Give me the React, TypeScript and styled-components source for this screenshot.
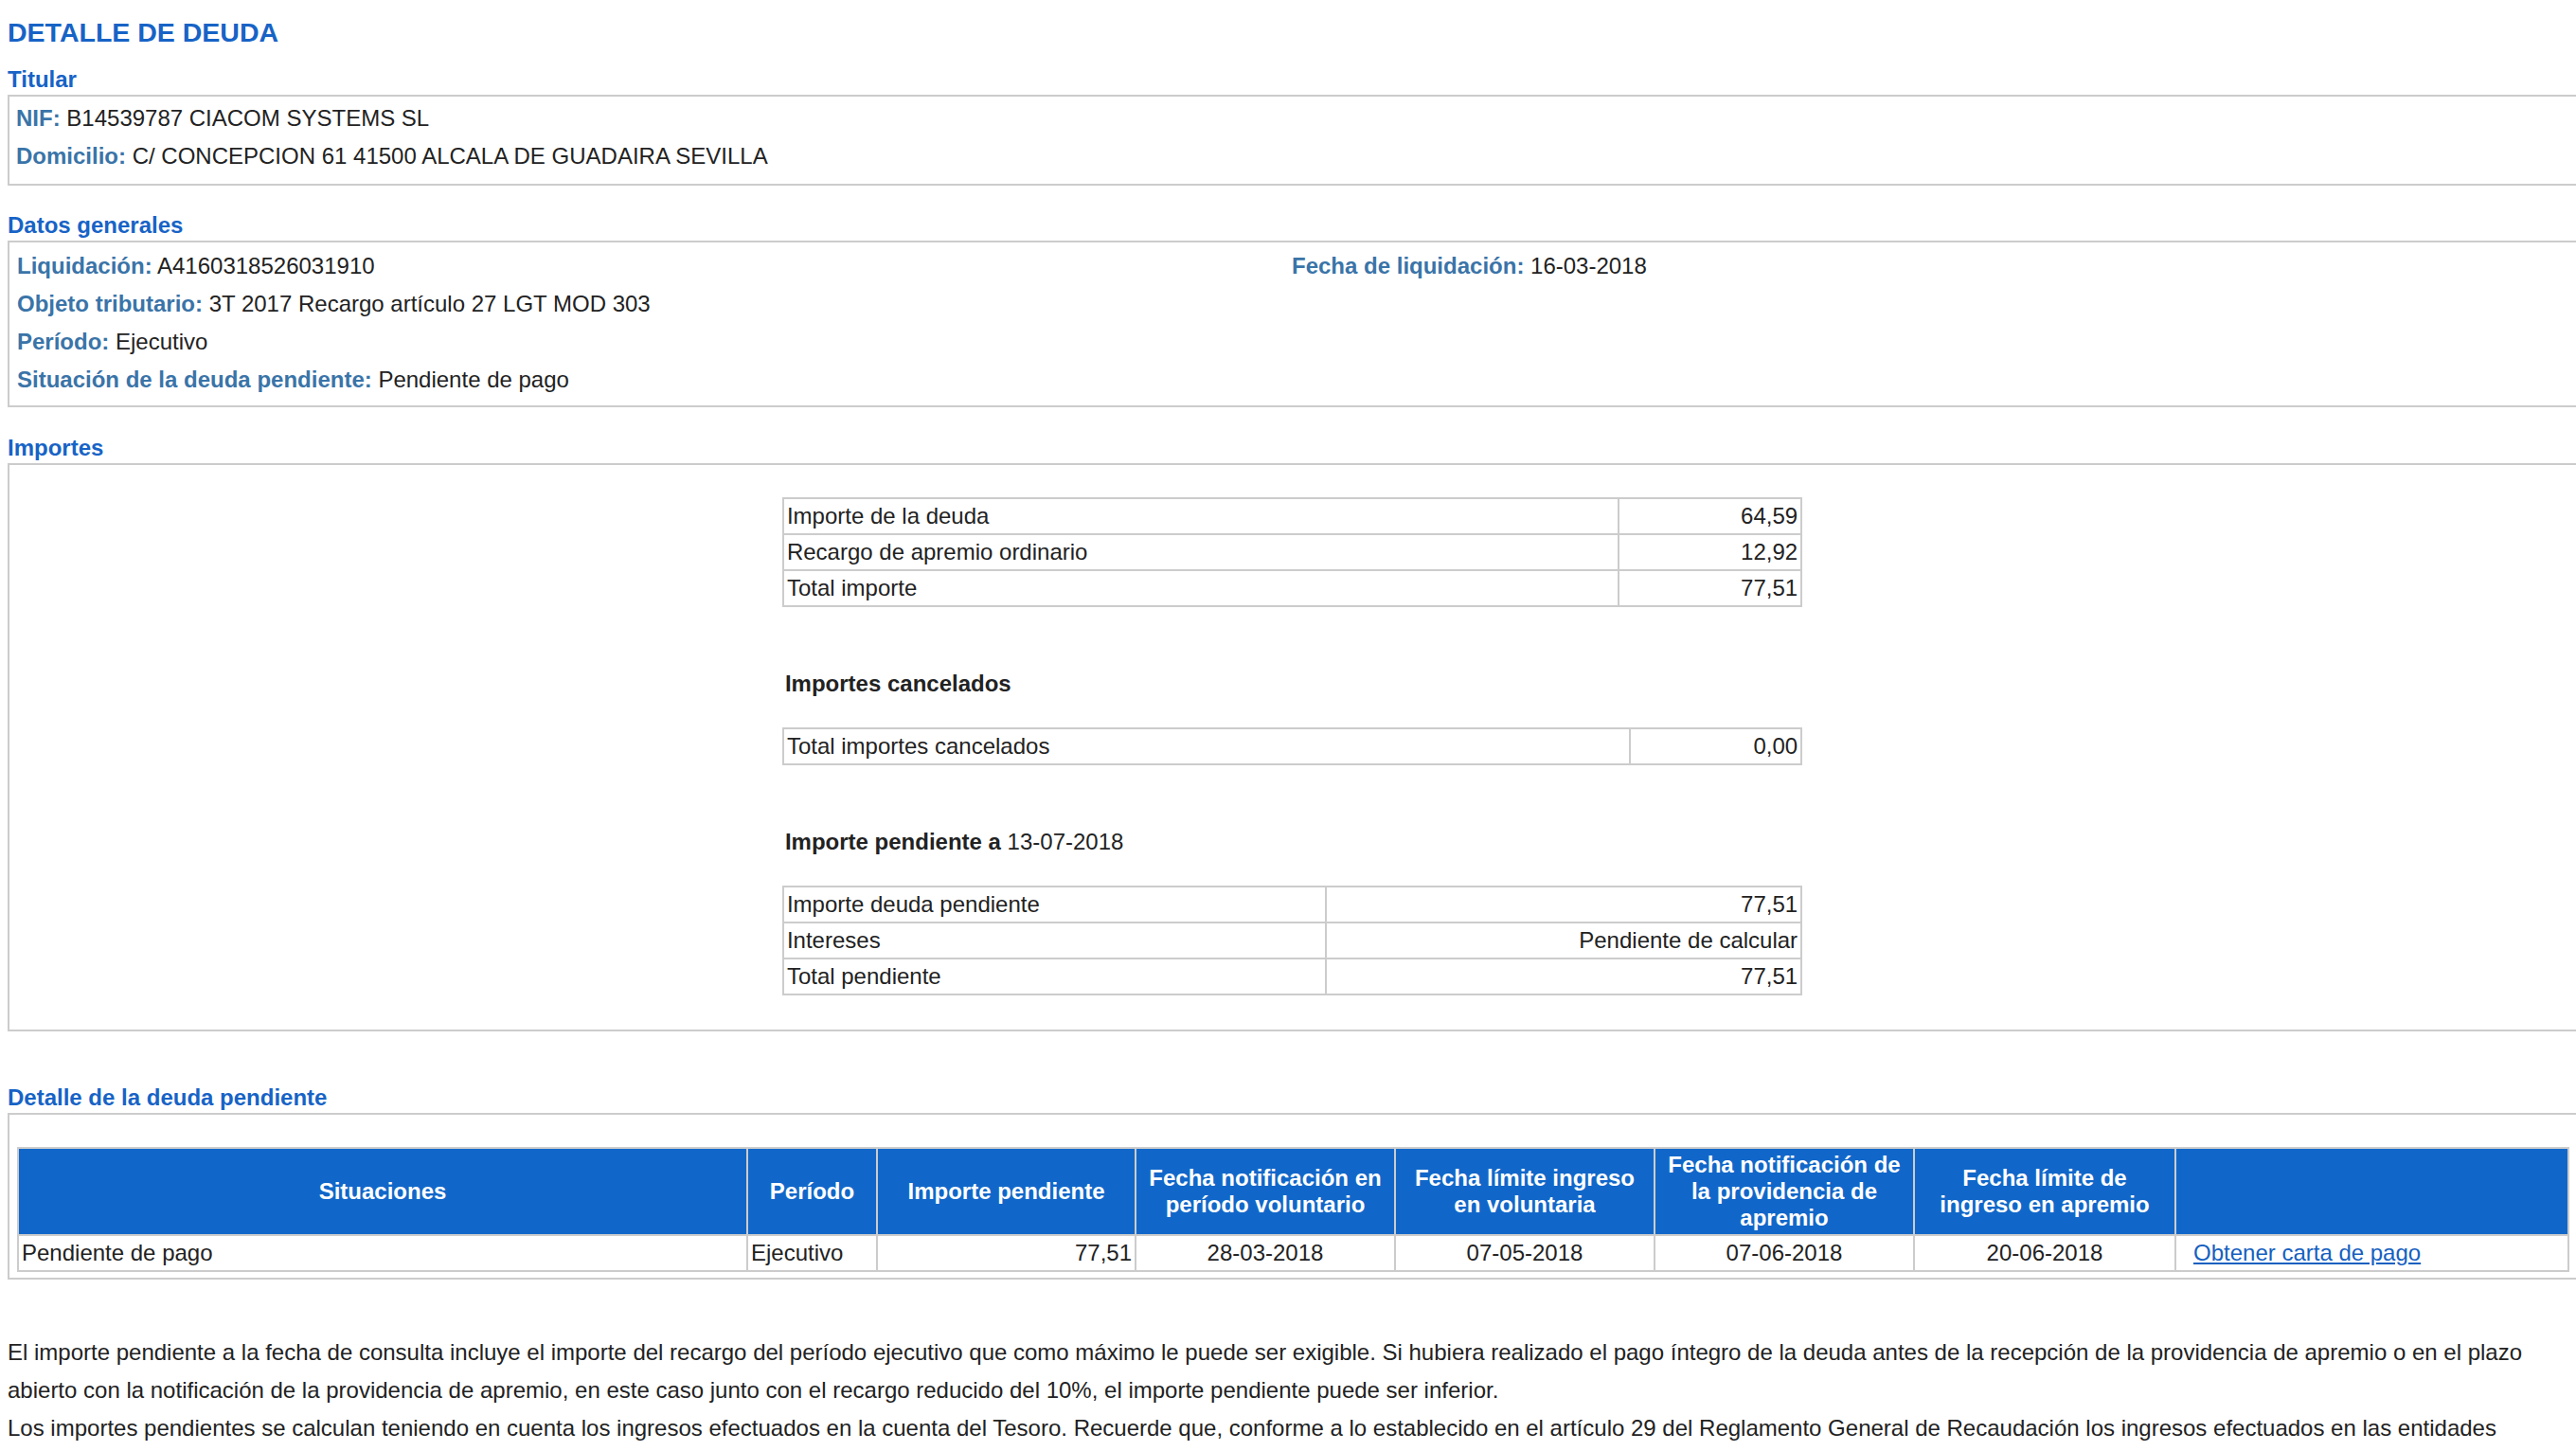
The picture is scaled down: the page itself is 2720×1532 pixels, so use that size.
import React from "react";
import styled, { createGlobalStyle } from "styled-components";

const GlobalStyle = createGlobalStyle`
  html, body {
    margin: 0;
    padding: 0;
    overflow: hidden;
    background: #ffffff;
  }
  body {
    font-family: "Liberation Sans", Arial, Helvetica, sans-serif;
    font-size: 24px;
    color: #222222;
  }
`;

const Page = styled.div`
  padding: 8px;
`;

const Title = styled.h1`
  margin: 10px 0 0;
  font-size: 28.5px;
  font-weight: bold;
  color: #1763c6;
  line-height: normal;
`;

const SectionTitle = styled.h2<{ $gap: number }>`
  margin: ${(p) => p.$gap}px 0 2px;
  font-size: 24px;
  font-weight: bold;
  color: #1763c6;
  line-height: normal;
`;

const Panel = styled.section<{ $pad: string }>`
  border: 2px solid #cccccc;
  margin-right: -24px;
  padding: ${(p) => p.$pad};
`;

const FieldGrid = styled.div`
  display: grid;
  grid-template-columns: 1346px 1fr;
`;

const Field = styled.div<{ $wide?: boolean }>`
  line-height: 40px;
  white-space: nowrap;
  grid-column: ${(p) => (p.$wide ? "1 / span 2" : "auto")};
`;

const Label = styled.span`
  font-weight: bold;
  color: #3a74a8;
`;

const AmountsBlock = styled.div`
  width: 40%;
  margin: 0 auto;
`;

const AmountsTable = styled.table<{ $labelWidth: string }>`
  width: 100%;
  border-collapse: collapse;
  font-size: 24px;

  td {
    border: 2px solid #cccccc;
    padding: 4px 3px;
    line-height: normal;
  }
  td:first-child {
    width: ${(p) => p.$labelWidth};
    text-align: left;
  }
  td:last-child {
    text-align: right;
  }
`;

const SubTitle = styled.div`
  margin: 67px 0 32px;
  padding-left: 3px;
  line-height: normal;
`;

const Strong = styled.strong`
  font-weight: bold;
`;

const DebtTable = styled.table`
  width: 100%;
  table-layout: fixed;
  border-collapse: collapse;
  font-size: 24px;
`;

const HeadCell = styled.th`
  background: #1167c9;
  color: #ffffff;
  font-weight: bold;
  border: 2px solid #cccccc;
  padding: 3px 4px;
  text-align: center;
  vertical-align: middle;
  line-height: normal;
`;

const BodyCell = styled.td<{ $align?: "left" | "right" | "center"; $indent?: number }>`
  border: 2px solid #cccccc;
  padding: 4px 3px 4px ${(p) => p.$indent ?? 3}px;
  text-align: ${(p) => p.$align ?? "left"};
  line-height: normal;
  white-space: nowrap;
`;

const PayLink = styled.a`
  color: #1560c0;
  text-decoration: underline;
  cursor: pointer;
`;

const Notes = styled.div`
  margin-top: 57px;
`;

const Note = styled.p`
  margin: 0;
  line-height: 40px;
`;

const amounts = [
  ["Importe de la deuda", "64,59"],
  ["Recargo de apremio ordinario", "12,92"],
  ["Total importe", "77,51"],
];

const pending = [
  ["Importe deuda pendiente", "77,51"],
  ["Intereses", "Pendiente de calcular"],
  ["Total pendiente", "77,51"],
];

const columns = [770, 137, 273, 274, 274, 274, 276, 415];

export default function App() {
  return (
    <>
      <GlobalStyle />
      <Page>
        <Title>DETALLE DE DEUDA</Title>

        <SectionTitle $gap={19}>Titular</SectionTitle>
        <Panel $pad="3px 30px 9px 7px">
          <Field>
            <Label>NIF:</Label> B14539787 CIACOM SYSTEMS SL
          </Field>
          <Field>
            <Label>Domicilio:</Label> C/ CONCEPCION 61 41500 ALCALA DE GUADAIRA SEVILLA
          </Field>
        </Panel>

        <SectionTitle $gap={28}>Datos generales</SectionTitle>
        <Panel $pad="5px 30px 7px 8px">
          <FieldGrid>
            <Field>
              <Label>Liquidación:</Label> A4160318526031910
            </Field>
            <Field>
              <Label>Fecha de liquidación:</Label> 16-03-2018
            </Field>
            <Field $wide>
              <Label>Objeto tributario:</Label> 3T 2017 Recargo artículo 27 LGT MOD 303
            </Field>
            <Field $wide>
              <Label>Período:</Label> Ejecutivo
            </Field>
            <Field $wide>
              <Label>Situación de la deuda pendiente:</Label> Pendiente de pago
            </Field>
          </FieldGrid>
        </Panel>

        <SectionTitle $gap={29}>Importes</SectionTitle>
        <Panel $pad="33.5px 23px 36px 8px">
          <AmountsBlock>
            <AmountsTable $labelWidth="82%">
              <tbody>
                {amounts.map(([k, v]) => (
                  <tr key={k}>
                    <td>{k}</td>
                    <td>{v}</td>
                  </tr>
                ))}
              </tbody>
            </AmountsTable>

            <SubTitle>
              <Strong>Importes cancelados</Strong>
            </SubTitle>
            <AmountsTable $labelWidth="83.2%">
              <tbody>
                <tr>
                  <td>Total importes cancelados</td>
                  <td>0,00</td>
                </tr>
              </tbody>
            </AmountsTable>

            <SubTitle>
              <Strong>Importe pendiente a</Strong> 13-07-2018
            </SubTitle>
            <AmountsTable $labelWidth="53.3%">
              <tbody>
                {pending.map(([k, v]) => (
                  <tr key={k}>
                    <td>{k}</td>
                    <td>{v}</td>
                  </tr>
                ))}
              </tbody>
            </AmountsTable>
          </AmountsBlock>
        </Panel>

        <SectionTitle $gap={56}>Detalle de la deuda pendiente</SectionTitle>
        <Panel $pad="34px 23px 6px 8px">
          <DebtTable>
            <colgroup>
              {columns.map((w, i) => (
                <col key={i} style={{ width: `${w}px` }} />
              ))}
            </colgroup>
            <thead>
              <tr>
                <HeadCell>Situaciones</HeadCell>
                <HeadCell>Período</HeadCell>
                <HeadCell>Importe pendiente</HeadCell>
                <HeadCell>Fecha notificación en período voluntario</HeadCell>
                <HeadCell>Fecha límite ingreso en voluntaria</HeadCell>
                <HeadCell>Fecha notificación de la providencia de apremio</HeadCell>
                <HeadCell>Fecha límite de ingreso en apremio</HeadCell>
                <HeadCell />
              </tr>
            </thead>
            <tbody>
              <tr>
                <BodyCell>Pendiente de pago</BodyCell>
                <BodyCell>Ejecutivo</BodyCell>
                <BodyCell $align="right">77,51</BodyCell>
                <BodyCell $align="center">28-03-2018</BodyCell>
                <BodyCell $align="center">07-05-2018</BodyCell>
                <BodyCell $align="center">07-06-2018</BodyCell>
                <BodyCell $align="center">20-06-2018</BodyCell>
                <BodyCell $indent={18}>
                  <PayLink>Obtener carta de pago</PayLink>
                </BodyCell>
              </tr>
            </tbody>
          </DebtTable>
        </Panel>

        <Notes>
          <Note>
            El importe pendiente a la fecha de consulta incluye el importe del recargo del período ejecutivo que como
            máximo le puede ser exigible. Si hubiera realizado el pago íntegro de la deuda antes de la recepción de la
            providencia de apremio o en el plazo abierto con la notificación de la providencia de apremio, en este caso
            junto con el recargo reducido del 10%, el importe pendiente puede ser inferior.
          </Note>
          <Note>
            Los importes pendientes se calculan teniendo en cuenta los ingresos efectuados en la cuenta del Tesoro.
            Recuerde que, conforme a lo establecido en el artículo 29 del Reglamento General de Recaudación los ingresos
            efectuados en las entidades colaboradoras se transfieren a la cuenta del Tesoro en los plazos establecidos,
            por lo que los pagos más recientes pueden no figurar todavía.
          </Note>
        </Notes>
      </Page>
    </>
  );
}
